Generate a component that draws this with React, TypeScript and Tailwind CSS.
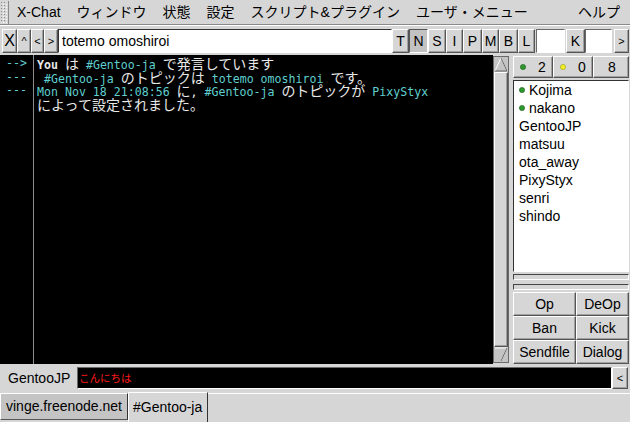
import React from 'react'

const raised =
  'border bg-[#d6d6d6] border-t-white border-l-white border-r-[#555] border-b-[#555] shadow-[inset_-1px_-1px_0_#a0a0a0]'
const pressed =
  'border bg-[#c2c2c2] border-t-[#555] border-l-[#555] border-r-white border-b-white'
const sunken = 'border border-t-[#6a6a6a] border-l-[#6a6a6a] border-r-white border-b-white'

function Btn({
  children,
  className = 'justify-center',
  down = false,
}: {
  children?: React.ReactNode
  className?: string
  down?: boolean
}) {
  return (
    <div className={`flex items-center shrink-0 ${down ? pressed : raised} ${className}`}>
      {children}
    </div>
  )
}

function Grip() {
  return (
    <svg width="9" height="23" className="shrink-0">
      <defs>
        <pattern id="grip" width="3" height="3" patternUnits="userSpaceOnUse">
          <rect x="0" y="0" width="1" height="1" fill="#fff" />
          <rect x="1" y="1" width="1" height="1" fill="#8a8a8a" />
        </pattern>
      </defs>
      <rect x="1" y="1" width="6" height="21" fill="url(#grip)" />
      <line x1="8.5" y1="0" x2="8.5" y2="23" stroke="#8a8a8a" />
    </svg>
  )
}

const menus = ['X-Chat', 'ウィンドウ', '状態', '設定', 'スクリプト&プラグイン', 'ユーザ・メニュー']

function MenuBar() {
  return (
    <div className="h-[25px] flex items-center border-b border-[#8a8a8a] shadow-[0_1px_0_#fff] shrink-0">
      <Grip />
      {menus.map((m) => (
        <span key={m} className="px-[8px] leading-[23px]">
          {m}
        </span>
      ))}
      <span className="ml-auto pr-[10px] leading-[23px]">ヘルプ</span>
    </div>
  )
}

const modes = [
  { k: 'T', w: 'w-[17px] justify-center' },
  { k: 'N', w: 'w-[19px] justify-center', down: true },
  { k: 'S', w: 'w-[18px] justify-center' },
  { k: 'I', w: 'w-[17px] justify-center' },
  { k: 'P', w: 'w-[19px] justify-center' },
  { k: 'M', w: 'w-[17px] justify-center' },
  { k: 'B', w: 'w-[19px] justify-center' },
  { k: 'L', w: 'w-[17px] justify-center' },
]

function Toolbar() {
  return (
    <div className="h-[24px] mt-[4px] flex pl-[2px] pr-[1px] shrink-0">
      <Btn className="w-[15px] justify-center text-[16px]">X</Btn>
      <Btn className="w-[14px] justify-center text-[11px]">^</Btn>
      <Btn className="w-[13px] justify-center text-[11px]">&lt;</Btn>
      <Btn className="w-[14px] justify-center text-[11px]">&gt;</Btn>
      <div className={`flex-1 bg-white flex items-center pl-[3px] ${sunken} border-t-[#333] border-l-[#333]`}>
        totemo omoshiroi
      </div>
      {modes.map((m) => (
        <Btn key={m.k} className={m.w} down={m.down}>
          {m.k}
        </Btn>
      ))}
      <div className={`w-[29px] ml-[1px] bg-white ${sunken}`} />
      <Btn className="w-[19px] ml-[1px] justify-center">K</Btn>
      <div className={`w-[27px] bg-white ${sunken}`} />
      <Btn className="w-[15px] ml-[2px] justify-center text-[11px]">&gt;</Btn>
    </div>
  )
}

const cyan = 'text-[#5fcfcf]'
const white = 'text-[#e8e8e8]'
const jp = "text-[14px] font-['Noto_Sans_CJK_JP',sans-serif]"

type Seg = { t: string; c: string; jp?: boolean; b?: boolean }

// latin cells are 7px, kanji/kana cells 14px
const lines: { pre: string; segs: Seg[] }[] = [
  {
    pre: '-->',
    segs: [
      { t: 'You', c: white, b: true },
      { t: ' ', c: white },
      { t: 'は', c: white, jp: true },
      { t: ' ', c: white },
      { t: '#Gentoo-ja', c: cyan },
      { t: ' ', c: white },
      { t: 'で発言しています', c: white, jp: true },
    ],
  },
  {
    pre: '---',
    segs: [
      { t: ' #Gentoo-ja ', c: cyan },
      { t: 'のトピックは', c: white, jp: true },
      { t: ' ', c: white },
      { t: 'totemo omoshiroi', c: cyan },
      { t: ' ', c: white },
      { t: 'です。', c: white, jp: true },
    ],
  },
  {
    pre: '---',
    segs: [
      { t: 'Mon Nov 18 21:08:56 ', c: cyan },
      { t: 'に', c: white, jp: true },
      { t: ', ', c: white },
      { t: '#Gentoo-ja', c: cyan },
      { t: ' ', c: white },
      { t: 'のトピックが', c: white, jp: true },
      { t: ' ', c: white },
      { t: 'PixyStyx', c: cyan },
    ],
  },
  {
    pre: '',
    segs: [{ t: 'によって設定されました。', c: white, jp: true }],
  },
]

function Chat() {
  return (
    <div className="w-[493px] h-full bg-black flex font-['DejaVu_Sans_Mono','Noto_Sans_CJK_JP',monospace] text-[11.6px] leading-[13.5px] shrink-0">
      <div className={`w-[34px] border-r border-[#8c8c8c] pt-[2px] pr-[6px] text-right ${cyan}`}>
        {lines.map((l, i) => (
          <div key={i} className="h-[13.5px] whitespace-pre">
            {l.pre}
          </div>
        ))}
      </div>
      <div className="flex-1 pl-[3px] pt-[2px]">
        {lines.map((l, i) => (
          <div key={i} className="h-[13.5px] flex items-baseline whitespace-pre">
            {l.segs.map((s, j) => (
              <span key={j} className={`${s.c} ${s.jp ? jp : ''} ${s.b ? 'font-bold' : ''}`}>
                {s.t}
              </span>
            ))}
          </div>
        ))}
      </div>
    </div>
  )
}

function Arrow({ up }: { up: boolean }) {
  return (
    <svg width="14" height="15" className="block">
      {up ? (
        <>
          <polyline points="1,14 7,1 13,14" fill="none" stroke="#fff" />
          <polyline points="7,1 13,14 1,14" fill="none" stroke="#666" />
        </>
      ) : (
        <>
          <polyline points="1,1 13,1 7,14" fill="none" stroke="#fff" />
          <polyline points="13,1 7,14" fill="none" stroke="#666" />
        </>
      )}
    </svg>
  )
}

function Scrollbar() {
  return (
    <div className="w-[16px] h-full py-[1px] shrink-0">
      <div className="h-full border border-[#6a6a6a] bg-[#c4c4c4] flex flex-col">
        <Arrow up />
        <div className={`flex-1 ${raised}`} />
        <Arrow up={false} />
      </div>
    </div>
  )
}

const users: { n: string; op?: boolean }[] = [
  { n: 'Kojima', op: true },
  { n: 'nakano', op: true },
  { n: 'GentooJP' },
  { n: 'matsuu' },
  { n: 'ota_away' },
  { n: 'PixyStyx' },
  { n: 'senri' },
  { n: 'shindo' },
]

function Dot({ color, edge = '#1a5a1a' }: { color: string; edge?: string }) {
  return (
    <svg width="6" height="6" className="shrink-0">
      <circle cx="3" cy="3" r="2.6" fill={color} stroke={edge} strokeWidth="0.6" />
    </svg>
  )
}

function UserPanel() {
  return (
    <div className="w-[116px] h-full flex flex-col ml-[4px] shrink-0">
      <div className="h-[22px] mt-[1px] flex">
        <Btn className="w-[40px] pl-[6px]">
          <Dot color="#2e9a2e" />
          <span className="ml-[12px]">2</span>
        </Btn>
        <Btn className="w-[40px] pl-[6px]">
          <Dot color="#f0f020" edge="#9a9a20" />
          <span className="ml-[12px]">0</span>
        </Btn>
        <Btn className="flex-1 pl-[14px]">8</Btn>
      </div>
      <div className={`h-[192px] mt-[2px] bg-white ${sunken} border-t-[#333] border-l-[#333] pl-[5px]`}>
        {users.map((u) => (
          <div key={u.n} className="h-[18px] flex items-center gap-[4px]">
            {u.op && <Dot color="#2e9a2e" />}
            <span>{u.n}</span>
          </div>
        ))}
      </div>
      <div className={`h-[6px] mt-[2px] ${sunken} border-t-[#444] border-l-[#444]`} />
      <div className={`h-[6px] mt-[4px] ${sunken} border-t-[#444] border-l-[#444]`} />
      <div className="mt-[2px] grid grid-cols-[63px_53px] grid-rows-[24px_24px_24px]">
        <Btn>Op</Btn>
        <Btn>DeOp</Btn>
        <Btn>Ban</Btn>
        <Btn>Kick</Btn>
        <Btn>Sendfile</Btn>
        <Btn>Dialog</Btn>
      </div>
    </div>
  )
}

function InputRow() {
  return (
    <div className="h-[22px] mt-[3px] flex items-center shrink-0 pr-[2px]">
      <div className="w-[77px] pl-[8px]">GentooJP</div>
      <div className={`flex-1 h-full bg-black flex items-center pl-[1px] ${sunken}`}>
        <span className="text-[#ff1a1a] text-[10.5px] font-['Noto_Sans_CJK_JP',sans-serif]">こんにちは</span>
      </div>
      <Btn className="w-[16px] h-full justify-center text-[11px]">&lt;</Btn>
    </div>
  )
}

function Tabs() {
  return (
    <div className="h-[30px] mt-[3px] flex items-start shrink-0">
      <div className="w-[128px] h-[27px] mt-[1px] bg-[#c4c4c4] border border-t-white border-l-white border-r-[#333] border-b-[#555] flex items-center pl-[5px]">
        vinge.freenode.net
      </div>
      <div className="w-[80px] h-[30px] bg-[#d6d6d6] border-l border-t border-r border-t-white border-l-white border-r-[#333] flex items-center pl-[4px]">
        #Gentoo-ja
      </div>
      <div className="flex-1 h-[2px] mt-[1px] border-t border-white" />
    </div>
  )
}

export default function App() {
  return (
    <div className="w-[630px] h-[422px] bg-[#d6d6d6] flex flex-col overflow-hidden font-['Liberation_Sans','Noto_Sans_CJK_JP',sans-serif] text-[14px] text-black">
      <MenuBar />
      <Toolbar />
      <div className="h-[309px] mt-[2px] flex shrink-0">
        <Chat />
        <Scrollbar />
        <UserPanel />
      </div>
      <InputRow />
      <Tabs />
    </div>
  )
}
